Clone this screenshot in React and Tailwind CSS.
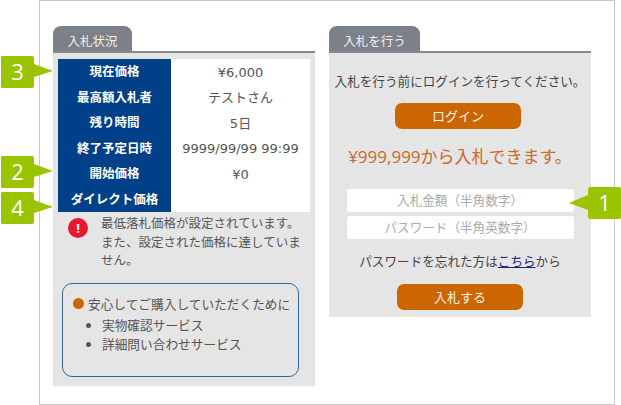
import React from "react";

const font = { fontFamily: '"Open Sans", "Noto Sans CJK JP", sans-serif' };
const valueFont = { fontFamily: '"DejaVu Sans", "Noto Sans CJK JP", sans-serif' };

const rows = [
  ["現在価格", "¥6,000"],
  ["最高額入札者", "テストさん"],
  ["残り時間", "5日"],
  ["終了予定日時", "9999/99/99 99:99"],
  ["開始価格", "¥0"],
  ["ダイレクト価格", ""],
];

function Tab({ children, width }) {
  return (
    <div className={`${width} h-[25px] bg-[#7c8187] rounded-t-[8px] text-[#f0f0f0] text-[12.5px] leading-[25px] pt-[3px] text-center`}>
      {children}
    </div>
  );
}

// 緑の番号ラベル
function Badge({ n, className, right }) {
  return (
    <div className={`absolute w-[52px] h-[32px] ${className}`}>
      <svg width="52" height="32" viewBox="0 0 52 32" className="absolute left-0 top-0">
        {right ? (
          <path d="M1 0H31Q33 0 33 2V8L52 15L33 21V30Q33 32 31 32H1Q0 32 0 30V2Q0 0 1 0Z" fill="#9bc400" />
        ) : (
          <path d="M19 8V2Q19 0 21 0H50Q52 0 52 2V30Q52 32 50 32H21Q19 32 19 30V23L0 16Z" fill="#9bc400" />
        )}
      </svg>
      <span className={`absolute top-0 ${right ? "left-0" : "left-[19px]"} w-[33px] text-center text-white text-[22px] leading-[31px]`}>
        {n}
      </span>
    </div>
  );
}

function OrangeButton({ children }) {
  return (
    <div className="w-[126px] h-[26px] bg-[#cc6600] rounded-[7px] text-[#fdf3e8] text-[13px] leading-[26px] text-center">
      {children}
    </div>
  );
}

export default function App() {
  return (
    <div className="relative w-[621px] h-[405px] bg-white overflow-hidden text-[#555]" style={font}>
      <div className="ml-[39px] w-[576px] h-[405px] border border-[#c8c8c8] pl-[13px] pt-[25px] flex gap-[14px] items-start">
        {/* 入札状況 */}
        <div className="w-[262px]">
          <Tab width="w-[79px]">入札状況</Tab>
          <div className="h-[335px] bg-[#e5e5e5] border-t-2 border-[#85898d] px-[5px] pt-[6px]">
            <table className="w-[252px] bg-white border-collapse table-fixed">
              <tbody>
                {rows.map(([label, value]) => (
                  <tr key={label} className="h-[25.5px]">
                    <th className="w-[113px] p-0 pt-[1px] bg-[#004088] text-white text-[12.5px] font-bold text-center leading-none">{label}</th>
                    <td className="p-0 pt-[1px] text-[13px] text-center leading-none" style={valueFont}>{value}</td>
                  </tr>
                ))}
              </tbody>
            </table>
            <div className="flex mt-[5px] ml-[10px]">
              <div className="w-[20px] h-[20px] mt-[1px] shrink-0 rounded-full bg-[#e8182c] text-white text-[13px] font-bold leading-[20px] text-center">!</div>
              <p className="ml-[13px] -mt-[2px] w-[204px] text-[12.5px] leading-[18.5px] text-[#555]">
                最低落札価格が設定されています。また、設定された価格に達していません。
              </p>
            </div>
            <div className="mt-[12px] ml-[4px] w-[237px] h-[94px] border border-[#33669a] rounded-[10px] pt-[10px] pl-[10px]">
              <div className="flex items-center text-[12.7px] leading-[20px]">
                <span className="w-[11px] h-[11px] rounded-full bg-[#cc6600] mr-[4px] shrink-0"></span>
                安心してご購入していただくために
              </div>
              <ul className="list-disc pl-[29px] text-[12.7px] leading-[19px] mt-[2px]">
                <li>実物確認サービス</li>
                <li>詳細問い合わせサービス</li>
              </ul>
            </div>
          </div>
        </div>

        {/* 入札を行う */}
        <div className="w-[262px]">
          <Tab width="w-[91px]">入札を行う</Tab>
          <div className="h-[266px] bg-[#e5e5e5] border-t-2 border-[#85898d] flex flex-col items-center">
            <p className="mt-[19px] text-[12.6px] leading-[20px] whitespace-nowrap text-[#444]">入札を行う前にログインを行ってください。</p>
            <div className="mt-[11px] mr-[4px]"><OrangeButton>ログイン</OrangeButton></div>
            <p className="mt-[16px] text-[17px] leading-[24px] whitespace-nowrap text-[#c9692a]">¥999,999から入札できます。</p>
            <div className="mt-[20px] w-[227px] h-[23px] bg-white rounded-[3px] text-[12.6px] leading-[23px] text-center text-[#aaa]">入札金額（半角数字）</div>
            <div className="mt-[4px] w-[227px] h-[23px] bg-white rounded-[3px] text-[12.6px] leading-[23px] text-center text-[#aaa]">パスワード（半角英数字）</div>
            <p className="mt-[13px] text-[12.6px] leading-[20px] whitespace-nowrap text-[#444]">
              パスワードを忘れた方は<span className="underline text-[#222277]">こちら</span>から
            </p>
            <div className="mt-[12px]"><OrangeButton>入札する</OrangeButton></div>
          </div>
        </div>
      </div>

      <Badge n="3" right className="left-[1px] top-[56px]" />
      <Badge n="2" right className="left-[1px] top-[156px]" />
      <Badge n="4" right className="left-[1px] top-[192px]" />
      <Badge n="1" className="left-[569px] top-[187px]" />
    </div>
  );
}
